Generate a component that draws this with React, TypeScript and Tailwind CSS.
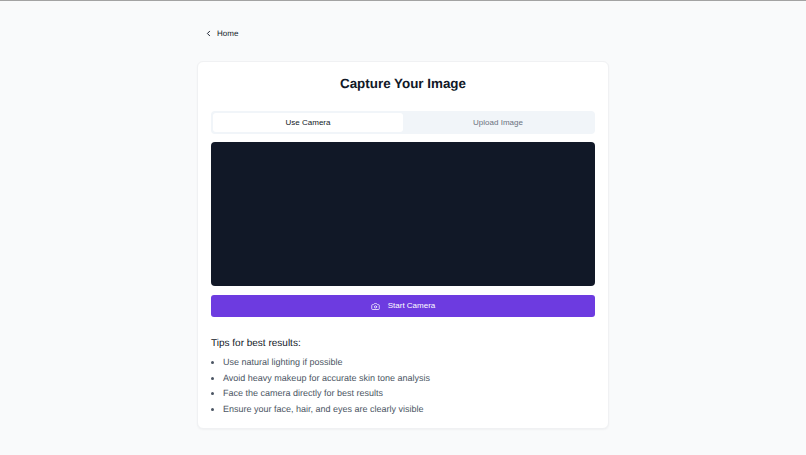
import { Camera, ChevronLeft } from 'lucide-react';

const tips = [
  'Use natural lighting if possible',
  'Avoid heavy makeup for accurate skin tone analysis',
  'Face the camera directly for best results',
  'Ensure your face, hair, and eyes are clearly visible',
];

export default function App() {
  return (
    <div className="h-[455px] overflow-hidden bg-[#f9fafb] border-t border-[#a3a3a3] font-['Liberation_Sans',Arial,sans-serif] [text-rendering:geometricPrecision]">
      <div className="w-[412px] mx-auto pt-[25px]">
        <div className="flex items-center h-[15px] pl-[7px] text-[#111827]">
          <ChevronLeft className="w-[9px] h-[9px]" strokeWidth={2.5} />
          <span className="ml-[4px] text-[8px] leading-[15px]">Home</span>
        </div>

        <div className="mt-[20px] h-[368px] bg-white rounded-[6px] border border-[#f0f1f3] shadow-[0_1px_2px_rgba(0,0,0,0.04)] px-[13px] pt-[12px]">
          <h1 className="text-center text-[13.4px] leading-[20px] font-bold text-[#111827]">Capture Your Image</h1>

          <div className="mt-[17px] h-[23px] bg-[#f1f5f9] rounded-[4px] p-[2px] grid grid-cols-2 text-[8px]">
            <button className="bg-white rounded-[3px] text-[#111827]">Use Camera</button>
            <button className="text-[#6b7280]">Upload Image</button>
          </div>

          <div className="mt-[8px] h-[144px] bg-[#111827] rounded-[4px]" />

          <button className="mt-[9px] w-full h-[22px] bg-[#6d3be0] rounded-[3px] flex items-center justify-center text-white text-[8px]">
            <Camera className="w-[9px] h-[9px] mr-[8px]" strokeWidth={2} />
            Start Camera
          </button>

          <h2 className="mt-[18px] text-[10px] leading-[17px] text-[#111827]">Tips for best results:</h2>
          <ul className="mt-[3px] text-[9px] text-[#4b5563]">
            {tips.map((tip) => (
              <li key={tip} className="flex items-center h-[15.6px]">
                <span className="w-[3px] h-[3px] rounded-full bg-[#4b5563] mr-[9px]" />
                {tip}
              </li>
            ))}
          </ul>
        </div>
      </div>
    </div>
  );
}
